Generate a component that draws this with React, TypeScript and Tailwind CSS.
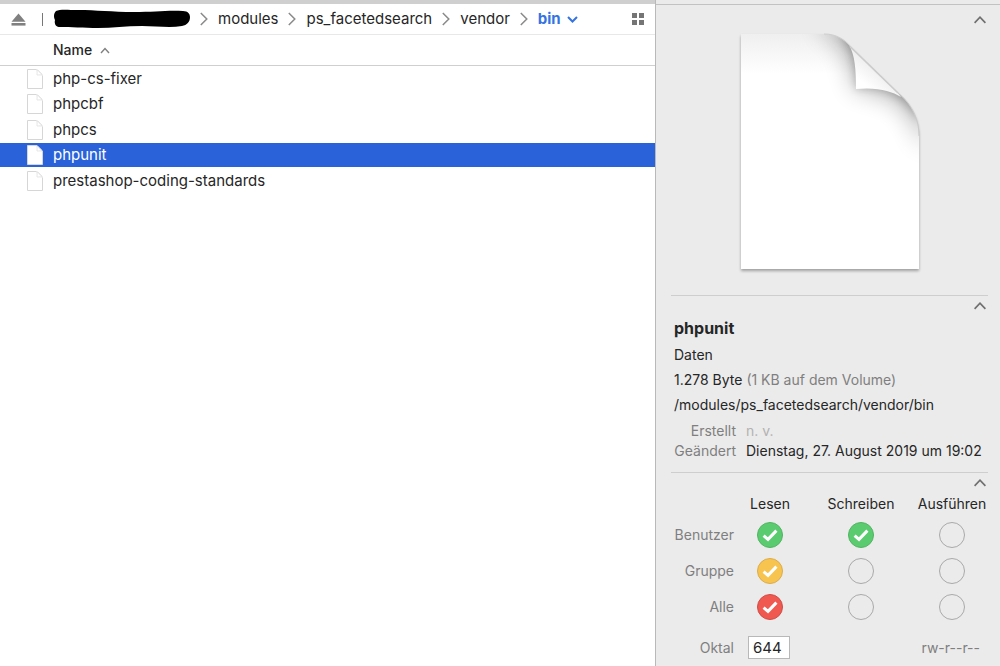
import React, { useState } from "react";

const files = ["php-cs-fixer", "phpcbf", "phpcs", "phpunit", "prestashop-coding-standards"];

const parents = ["modules", "ps_facetedsearch", "vendor"];

const columns = ["Lesen", "Schreiben", "Ausführen"];

interface PermissionRow {
  name: string;
  color: string;
  flags: boolean[];
}

const initialPermissions: PermissionRow[] = [
  {
    name: "Benutzer",
    color: "checked:bg-[#5bcb70] checked:border-[#50b562]",
    flags: [true, true, false],
  },
  {
    name: "Gruppe",
    color: "checked:bg-[#f8c450] checked:border-[#dbac49]",
    flags: [true, false, false],
  },
  {
    name: "Alle",
    color: "checked:bg-[#f0594f] checked:border-[#cf4c45]",
    flags: [true, false, false],
  },
];

const EjectIcon = () => (
  <svg width="16" height="13" viewBox="0 0 16 13" fill="#808080">
    <path d="M8.5 0.5 L15.5 8.8 H1.5 Z" />
    <rect x="1.5" y="10" width="14" height="2.6" />
  </svg>
);

const Separator = () => (
  <svg width="8" height="14" viewBox="0 0 8 14" fill="none" stroke="#8a8a8a" strokeWidth="1.5">
    <path d="M0.8 1 L6.8 7 L0.8 13" />
  </svg>
);

const Redacted = () => (
  <svg width="136" height="20" viewBox="0 0 136 20">
    <path
      d="M2 2 C6 0 14 1 24 1 C42 1 58 3 80 3 C100 3 114 1 129 2 C134 2 136 5 136 8 C136 13 133 16 128 17 C116 19 102 17 88 17 C72 17 58 19 44 19 C30 19 16 18 6 18 C2 18 0 15 1 11 C0 9 -1 5 2 2 Z"
      fill="#000"
    />
  </svg>
);

const GridIcon = () => (
  <svg width="12" height="12" viewBox="0 0 12 12" fill="#757575">
    <rect width="5" height="5" />
    <rect x="7" width="5" height="5" />
    <rect y="7" width="5" height="5" />
    <rect x="7" y="7" width="5" height="5" />
  </svg>
);

const FileIcon = () => (
  <svg width="16" height="20" viewBox="0 0 16 20" strokeWidth="1">
    <path d="M0.5 0.5 H9.5 C11 1 15 5 15.5 6.5 V19.5 H0.5 Z" fill="#fff" stroke="#d6d6d6" />
    <path d="M9.5 0.5 C10.5 2.5 10 4 10 6 C12 6 14 5.5 15.5 6.5" fill="none" stroke="#e6e6e6" />
  </svg>
);

const CollapseButton = ({ label }: { label: string }) => (
  <button type="button" aria-label={label} className="flex h-4 w-4 items-center justify-center">
    <svg width="12" height="8" viewBox="0 0 12 8" fill="none" stroke="#707070" strokeWidth="1.7">
      <path d="M0.6 6.8 L6 1.2 L11.4 6.8" />
    </svg>
  </button>
);

const PAGE = "M6 6 H89 C101 6 109 11 116 19 L162 64 C178 77 184 92 184 108 V241 H6 Z";

// Blank sheet with its upper right corner curled over
const DocumentPreview = () => (
  <svg width="190" height="250" viewBox="0 0 190 250">
    <defs>
      <clipPath id="sheet">
        <path d={PAGE} />
      </clipPath>
      <linearGradient id="topShade" x1="0" y1="0" x2="0" y2="1">
        <stop offset="0" stopColor="#efefef" />
        <stop offset="0.17" stopColor="#fff" />
      </linearGradient>
      <linearGradient id="flap" x1="0.3" y1="0.75" x2="0.55" y2="0.45">
        <stop offset="0" stopColor="#fff" />
        <stop offset="1" stopColor="#ededed" />
      </linearGradient>
      <filter id="drop" x="-10%" y="-10%" width="120%" height="120%">
        <feGaussianBlur stdDeviation="1.8" />
      </filter>
      <filter id="soft" x="-50%" y="-50%" width="200%" height="200%">
        <feGaussianBlur stdDeviation="13" />
      </filter>
      <filter id="near" x="-50%" y="-50%" width="200%" height="200%">
        <feGaussianBlur stdDeviation="4" />
      </filter>
    </defs>
    <path d={PAGE} fill="#000" opacity="0.32" filter="url(#drop)" transform="translate(0 2)" />
    <path d={PAGE} fill="url(#topShade)" />
    <g clipPath="url(#sheet)" fill="#000">
      <path
        d="M80 -4 C108 6 119 28 121 61 C150 60 180 72 190 122 L206 60 L130 -16 Z"
        opacity="0.32"
        filter="url(#soft)"
      />
      <path
        d="M106 8 C118 20 121 40 121 61 C146 58 166 64 184 92 L190 60 L130 0 Z"
        opacity="0.2"
        filter="url(#near)"
      />
    </g>
    <path
      d="M114 17 C120 27 121 42 121 61 C143 59 156 63 166 69 L162 64 L116 19 Z"
      fill="url(#flap)"
    />
    <path d="M115 18.5 L163 65" stroke="#cbcbcb" strokeWidth="1.6" fill="none" />
    <path d="M89 6 C101 6 109 11 116 19" stroke="#cfcfcf" fill="none" />
    <path d="M162 64 C178 77 184 92 184 108" stroke="#cbcbcb" fill="none" />
  </svg>
);

const App: React.FC = () => {
  const [selected, setSelected] = useState("phpunit");
  const [permissions, setPermissions] = useState(initialPermissions);

  const octal = permissions
    .map((row) => row.flags.reduce((sum, flag, i) => sum + (flag ? 4 >> i : 0), 0))
    .join("");
  const symbolic = permissions
    .map((row) => row.flags.map((flag, i) => (flag ? "rwx"[i] : "-")).join(""))
    .join("");

  const togglePermission = (rowIndex: number, flagIndex: number) => {
    setPermissions((rows) =>
      rows.map((row, r) =>
        r === rowIndex
          ? { ...row, flags: row.flags.map((flag, f) => (f === flagIndex ? !flag : flag)) }
          : row
      )
    );
  };

  const handleOctalChange = (value: string) => {
    if (!/^[0-7]{3}$/.test(value)) return;
    setPermissions((rows) =>
      rows.map((row, r) => ({ ...row, flags: [4, 2, 1].map((bit) => (Number(value[r]) & bit) > 0) }))
    );
  };

  return (
    <div className="flex min-h-screen bg-white font-[Inter,'Liberation_Sans',sans-serif] text-[#262626]">
      <main className="min-w-0 flex-1 border-r border-[#b9b9b9] text-[15px]">
        <div className="h-1 bg-[#d0cfd0]" />
        <nav className="flex h-[31px] items-center border-b border-[#e8e8e8] pr-[11px] pl-[10px]">
          <button type="button" aria-label="Auswerfen">
            <EjectIcon />
          </button>
          <span className="mr-[11px] ml-4 h-[13px] w-px bg-[#777]" />
          <div className="flex items-center gap-[10px]">
            <Redacted />
            {parents.map((name) => (
              <React.Fragment key={name}>
                <Separator />
                <button type="button">{name}</button>
              </React.Fragment>
            ))}
            <Separator />
            <button type="button" className="flex items-center gap-[6px] font-bold text-[#3573e3]">
              bin
              <svg width="11" height="7" viewBox="0 0 11 7" fill="none" stroke="#3573e3" strokeWidth="2">
                <path d="M1 1 L5.5 5.5 L10 1" />
              </svg>
            </button>
          </div>
          <button type="button" aria-label="Ansicht" className="ml-auto">
            <GridIcon />
          </button>
        </nav>

        <div className="flex h-[31px] items-center border-b border-[#cfcfcf] pl-[53px]">
          <button type="button" className="flex items-center gap-2 text-sm font-medium">
            Name
            <svg width="10" height="7" viewBox="0 0 10 7" fill="none" stroke="#808080" strokeWidth="1.4">
              <path d="M1 6 L5 1.5 L9 6" />
            </svg>
          </button>
        </div>

        <ul className="pt-px">
          {files.map((file) => (
            <li key={file} className="odd:mb-px even:mb-0.5">
              <button
                type="button"
                onClick={() => setSelected(file)}
                className={`flex h-6 w-full items-center gap-[10px] pl-[27px] text-left ${
                  file === selected ? "bg-[#2962d9] text-white" : ""
                }`}
              >
                <FileIcon />
                {file}
              </button>
            </li>
          ))}
        </ul>
      </main>

      <aside className="w-[344px] shrink-0 bg-[#ebebeb] text-sm">
        <div className="h-[5px] border-b border-[#c2c2c2]" />
        <div className="pr-3 pl-[15px]">
          <section className="flex h-[290px] flex-col items-center">
            <div className="flex h-[23px] items-end self-end">
              <CollapseButton label="Vorschau einklappen" />
            </div>
            <DocumentPreview />
          </section>

          <section className="border-t border-[#cecece] pb-[11px]">
            <div className="flex justify-end pt-0.5">
              <CollapseButton label="Info einklappen" />
            </div>
            <div className="px-[3px] pb-1">
              <h2 className="text-base leading-7 font-bold">phpunit</h2>
              <p className="leading-[25px]">Daten</p>
              <p className="leading-[25px]">
                1.278 Byte <span className="text-[#7f7f7f]">(1 KB auf dem Volume)</span>
              </p>
              <p className="leading-[25px]">/modules/ps_facetedsearch/vendor/bin</p>
            </div>
            <dl className="grid grid-cols-[65px_1fr] gap-x-[10px] leading-5 whitespace-nowrap">
              <dt className="text-right text-[#7f7f7f]">Erstellt</dt>
              <dd className="text-[#b2b2b2]">n. v.</dd>
              <dt className="text-right text-[#7f7f7f]">Geändert</dt>
              <dd>Dienstag, 27. August 2019 um 19:02</dd>
            </dl>
          </section>

          <section className="border-t border-[#cecece]">
            <div className="flex justify-end pt-0.5">
              <CollapseButton label="Rechte einklappen" />
            </div>
            <table className="w-full table-fixed">
              <colgroup>
                <col className="w-[63px]" />
                <col className="w-[72px]" />
                <col className="w-[110px]" />
                <col className="w-[72px]" />
              </colgroup>
              <thead>
                <tr className="h-[26px]">
                  <td />
                  {columns.map((column) => (
                    <th key={column} id={column} scope="col" className="p-0 font-normal">
                      {column}
                    </th>
                  ))}
                </tr>
              </thead>
              <tbody>
                {permissions.map((row, r) => (
                  <tr key={row.name} className="h-9">
                    <th id={row.name} scope="row" className="p-0 text-right font-normal text-[#7f7f7f]">
                      {row.name}
                    </th>
                    {row.flags.map((flag, f) => (
                      <td key={columns[f]} className="p-0">
                        <label className="relative mx-auto block h-[26px] w-[26px]">
                          <input
                            type="checkbox"
                            checked={flag}
                            onChange={() => togglePermission(r, f)}
                            aria-labelledby={`${row.name} ${columns[f]}`}
                            className={`peer block h-[26px] w-[26px] appearance-none rounded-full border border-[#a9a9a9] ${row.color}`}
                          />
                          <svg
                            viewBox="0 0 26 26"
                            fill="none"
                            stroke="#fff"
                            strokeWidth="3"
                            className="pointer-events-none absolute inset-0 hidden peer-checked:block"
                          >
                            <path d="M6.6 13.6 L11 17.4 L19.4 8.6" />
                          </svg>
                        </label>
                      </td>
                    ))}
                  </tr>
                ))}
              </tbody>
            </table>
            <div className="flex items-center pt-[11px] pr-2 text-[#7f7f7f]">
              <label htmlFor="octal" className="w-[63px] text-right">
                Oktal
              </label>
              <input
                id="octal"
                key={octal}
                defaultValue={octal}
                maxLength={3}
                onChange={(e) => handleOctalChange(e.target.value)}
                className="ml-[14px] h-[23px] w-[42px] border border-[#b8b8b8] bg-white px-1 text-[15px] text-[#262626]"
              />
              <span className="ml-auto">{symbolic}</span>
            </div>
          </section>
        </div>
      </aside>
    </div>
  );
};

export default App;
